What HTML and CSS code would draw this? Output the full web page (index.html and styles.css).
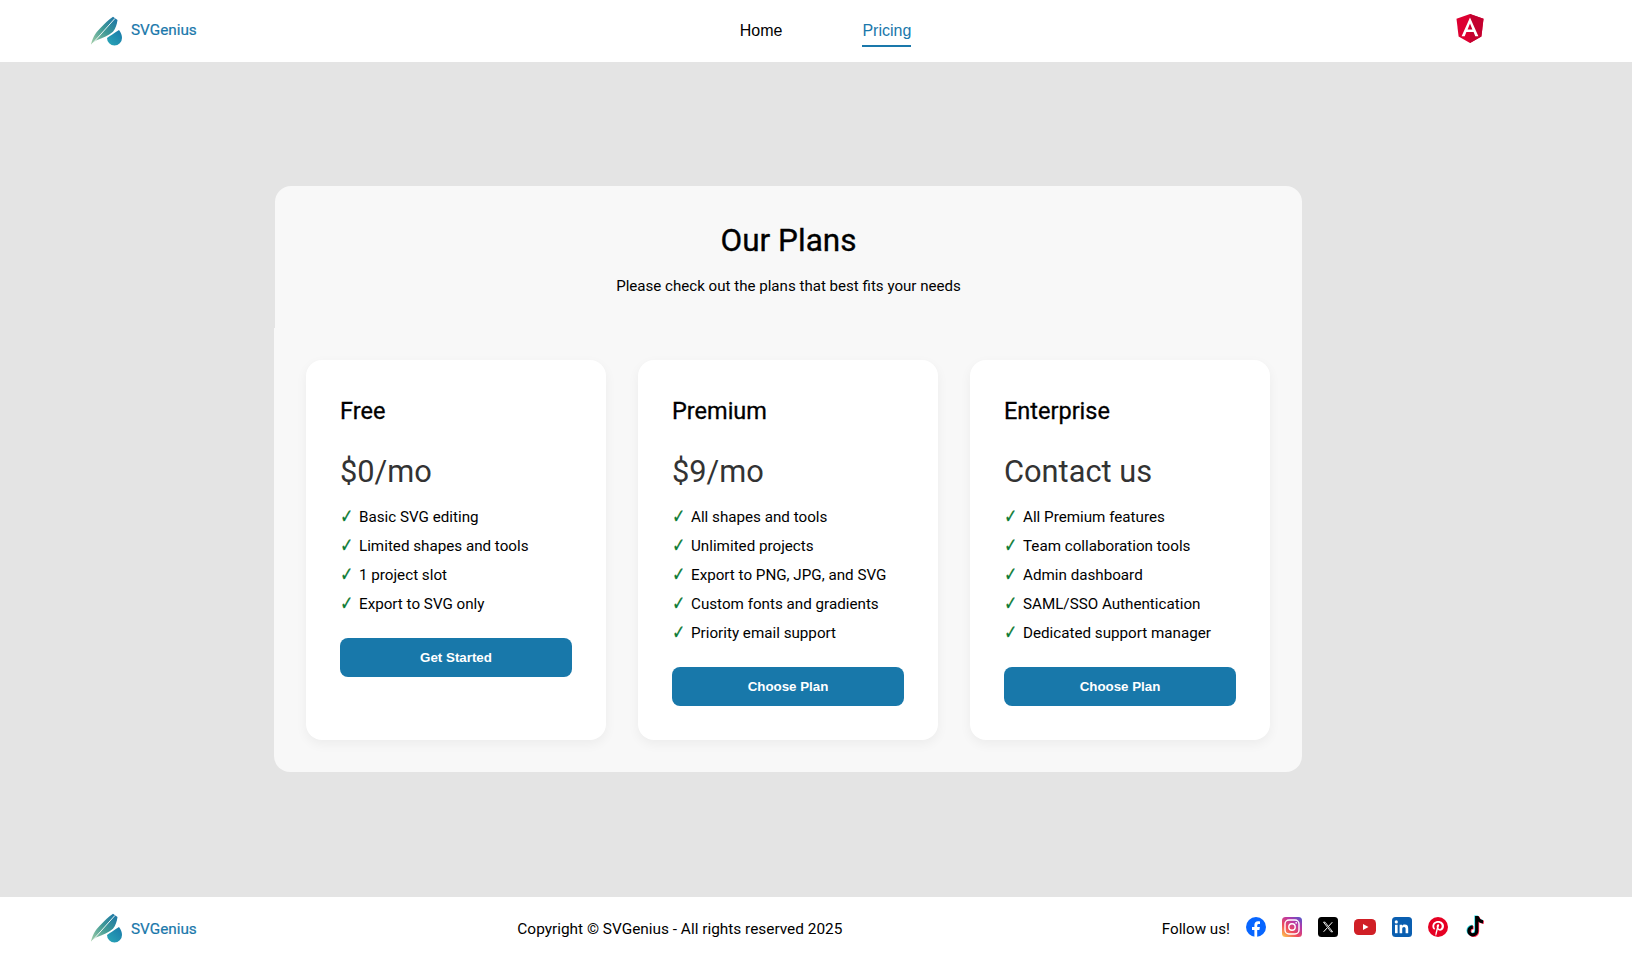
FILE: index.html
```html
<!DOCTYPE html>
<html lang="en">
<head>
    <meta charset="UTF-8">
    <title>SVGenius - Pricing</title>
    <link rel="stylesheet" href="styles.css">
</head>
<body>
    <!-- Top bar -->
    <header class="topbar">
        <a class="brand" href="#">
            <svg class="brand-logo" viewBox="0 0 32 30">
                <defs>
                    <linearGradient id="featherA" x1="0" y1="1" x2="1" y2="0">
                        <stop offset="0" stop-color="#a4cfa8"/>
                        <stop offset="0.5" stop-color="#3f9a96"/>
                        <stop offset="1" stop-color="#1a73a8"/>
                    </linearGradient>
                    <linearGradient id="dropA" x1="0" y1="1" x2="1" y2="0">
                        <stop offset="0" stop-color="#2aa8b8"/>
                        <stop offset="1" stop-color="#1878a8"/>
                    </linearGradient>
                </defs>
                <path d="M1 28.5 C3 20 7 15 11.7 10.7 C15 7.5 18 4 23 .8 L27.5 4 C27 8 25.5 13 23 15.7 C19 19 13 22 6 24.5 Z" fill="url(#featherA)"/>
                <path d="M2 28 L25 2.4" stroke="#fff" stroke-width="0.9"/>
                <path d="M17 22 C20 20 24 17 29 14 C31 17 32 19 32 22 A7.5 7.5 0 0 1 17 22 Z" fill="url(#dropA)"/>
            </svg>
            <span>SVGenius</span>
        </a>
        <nav class="nav">
            <a href="#">Home</a>
            <a href="#" class="active">Pricing</a>
        </nav>
        <div class="framework">
            <svg viewBox="0 0 28 30" width="28" height="30">
                <path d="M14 0 L27.5 4.8 L25.4 22.6 L14 29 L2.6 22.6 L.5 4.8 Z" fill="#dd0031"/>
                <path d="M14 0 L27.5 4.8 L25.4 22.6 L14 29 Z" fill="#c3002f"/>
                <path d="M14 3.4 L5.6 22.2 H8.7 L10.4 18 H17.6 L19.3 22.2 H22.4 Z M16.4 15.4 H11.6 L14 9.6 Z" fill="#fff" fill-rule="evenodd"/>
            </svg>
        </div>
    </header>

    <main class="content">
        <section class="plans">
            <div class="plans-head">
                <h1>Our Plans</h1>
                <p>Please check out the plans that best fits your needs</p>
            </div>
            <div class="plans-grid">
                <div class="card">
                    <h2>Free</h2>
                    <div class="price">$0/mo</div>
                    <ul>
                        <li>Basic SVG editing</li>
                        <li>Limited shapes and tools</li>
                        <li>1 project slot</li>
                        <li>Export to SVG only</li>
                    </ul>
                    <button class="plan-btn">Get Started</button>
                </div>
                <div class="card">
                    <h2>Premium</h2>
                    <div class="price">$9/mo</div>
                    <ul>
                        <li>All shapes and tools</li>
                        <li>Unlimited projects</li>
                        <li>Export to PNG, JPG, and SVG</li>
                        <li>Custom fonts and gradients</li>
                        <li>Priority email support</li>
                    </ul>
                    <button class="plan-btn">Choose Plan</button>
                </div>
                <div class="card">
                    <h2>Enterprise</h2>
                    <div class="price">Contact us</div>
                    <ul>
                        <li>All Premium features</li>
                        <li>Team collaboration tools</li>
                        <li>Admin dashboard</li>
                        <li>SAML/SSO Authentication</li>
                        <li>Dedicated support manager</li>
                    </ul>
                    <button class="plan-btn">Choose Plan</button>
                </div>
            </div>
        </section>
    </main>

    <!-- Footer -->
    <footer class="footer">
        <a class="brand" href="#">
            <svg class="brand-logo" viewBox="0 0 32 30">
                <path d="M1 28.5 C3 20 7 15 11.7 10.7 C15 7.5 18 4 23 .8 L27.5 4 C27 8 25.5 13 23 15.7 C19 19 13 22 6 24.5 Z" fill="url(#featherA)"/>
                <path d="M2 28 L25 2.4" stroke="#fff" stroke-width="0.9"/>
                <path d="M17 22 C20 20 24 17 29 14 C31 17 32 19 32 22 A7.5 7.5 0 0 1 17 22 Z" fill="url(#dropA)"/>
            </svg>
            <span>SVGenius</span>
        </a>
        <div class="copyright">Copyright © SVGenius - All rights reserved 2025</div>
        <div class="social">
            <span class="follow">Follow us!</span>
            <svg class="social-icon" viewBox="0 0 20 20">
                <circle cx="10" cy="10" r="10" fill="#0866ff"/>
                <path d="M8.4 20 V13 H6 V10 H8.4 V8 C8.4 5.5 9.8 4.2 12 4.2 C13 4.2 14 4.4 14 4.4 V7 H12.8 C11.6 7 11.2 7.7 11.2 8.5 V10 H13.9 L13.4 13 H11.2 V20 Z" fill="#fff"/>
            </svg>
            <svg class="social-icon" viewBox="0 0 20 20">
                <defs>
                    <linearGradient id="insta" x1="0.1" y1="1" x2="0.9" y2="0">
                        <stop offset="0" stop-color="#fdc14f"/>
                        <stop offset="0.35" stop-color="#ef4a5a"/>
                        <stop offset="0.7" stop-color="#b737a8"/>
                        <stop offset="1" stop-color="#5a55c8"/>
                    </linearGradient>
                </defs>
                <rect width="20" height="20" rx="3.5" fill="url(#insta)"/>
                <rect x="3" y="3" width="14" height="14" rx="4" fill="none" stroke="#fff" stroke-width="1.4"/>
                <circle cx="10" cy="10" r="3.2" fill="none" stroke="#fff" stroke-width="1.4"/>
                <circle cx="14.2" cy="5.8" r="0.9" fill="#fff"/>
            </svg>
            <svg class="social-icon" viewBox="0 0 20 20">
                <rect width="20" height="20" rx="3.5" fill="#000"/>
                <path d="M5.5 5.2 L13 14.8 H14.6 L7.1 5.2 Z" fill="none" stroke="#fff" stroke-width="0.9"/>
                <path d="M14.3 5.2 L10.6 9.3 M9.2 10.9 L5.6 14.8" stroke="#fff" stroke-width="1"/>
            </svg>
            <svg class="social-icon yt" viewBox="0 0 22 16">
                <rect width="22" height="16" rx="4.5" fill="#d01f26"/>
                <path d="M9 5 L14.5 8 L9 11 Z" fill="#fff"/>
            </svg>
            <svg class="social-icon" viewBox="0 0 20 20">
                <rect width="20" height="20" rx="3.5" fill="#0a5eb0"/>
                <rect x="3" y="7.8" width="2.6" height="8.4" fill="#fff"/>
                <circle cx="4.3" cy="4.9" r="1.6" fill="#fff"/>
                <path d="M7.6 7.8 H10 V9 C10.5 8.1 11.5 7.6 12.8 7.6 C15.4 7.6 16.2 9.2 16.2 11.6 V16.2 H13.6 V12.1 C13.6 11 13.3 10 12.1 10 C10.8 10 10.2 10.9 10.2 12.1 V16.2 H7.6 Z" fill="#fff"/>
            </svg>
            <svg class="social-icon" viewBox="0 0 20 20">
                <circle cx="10" cy="10" r="10" fill="#e60023"/>
                <path d="M8.1 18.6 C8.5 17.6 9 15.8 9.8 12.5 C10.2 13.2 11.1 13.7 12.1 13.7 C14.7 13.7 16 11.3 16 9 C16 6.2 13.5 4 10.3 4 C6.6 4 4.4 6.5 4.4 9.2 C4.4 10.6 5 12 6.2 12.6 C6.6 12.8 6.9 12.1 7 11.5 C6.4 10.9 6.2 10.1 6.2 9.3 C6.2 7.3 7.8 5.8 10.1 5.8 C12.2 5.8 13.7 7.1 13.7 9 C13.7 10.6 13 12 11.7 12 C10.9 12 10.3 11.3 10.5 10.6 C10.7 9.7 11.2 8.8 11.2 8.1 C11.2 6.6 9 6.9 8.7 8.9 C8.6 9.6 8.8 10.2 8.9 10.4 L7.5 16 C7.3 17 7.4 18 7.5 18.6 Z" fill="#fff"/>
            </svg>
            <svg class="social-icon tt" viewBox="0 0 20 22">
                <path d="M11.6 1 V14.6 A3.6 3.6 0 1 1 8 11" fill="none" stroke="#25d8e0" stroke-width="3" transform="translate(-.7 -.5)"/>
                <path d="M12 1.5 C12.6 4.4 14.6 6 17.4 6.2" fill="none" stroke="#25d8e0" stroke-width="3" transform="translate(-.7 -.5)"/>
                <path d="M11.6 1 V14.6 A3.6 3.6 0 1 1 8 11" fill="none" stroke="#fe2c55" stroke-width="3" transform="translate(.7 .5)"/>
                <path d="M12 1.5 C12.6 4.4 14.6 6 17.4 6.2" fill="none" stroke="#fe2c55" stroke-width="3" transform="translate(.7 .5)"/>
                <path d="M11.6 1 V14.6 A3.6 3.6 0 1 1 8 11" fill="none" stroke="#000" stroke-width="3"/>
                <path d="M12 1.5 C12.6 4.4 14.6 6 17.4 6.2" fill="none" stroke="#000" stroke-width="3"/>
            </svg>
        </div>
    </footer>
</body>
</html>
```

FILE: styles.css
```css
* {
    box-sizing: border-box;
}

body {
    margin: 0;
    height: 955px;
    display: flex;
    flex-direction: column;
    font-family: Roboto, "Liberation Sans", Arial, sans-serif;
    background-color: #e4e4e4;
    color: #000;
    overflow: hidden;
}

a {
    text-decoration: none;
    color: inherit;
}

/* Top bar */
.topbar {
    height: 62px;
    background-color: #fff;
    display: flex;
    justify-content: space-between;
    align-items: center;
    padding: 0 146px 0 90px;
}
.brand {
    display: flex;
    align-items: center;
    gap: 9px;
    color: #1a78ab;
    font-size: 15.3px;
    -webkit-text-stroke: 0.2px #1a78ab;
    width: 108px;
    white-space: nowrap;
}
.brand-logo {
    width: 32px;
    height: 30px;
    flex: none;
}
.topbar .brand span {
    margin-top: -2px;
}
.nav {
    display: flex;
    gap: 80px;
    margin-top: -1px;
    font-family: "Liberation Sans", Arial, sans-serif;
    font-size: 16px;
}
.nav a {
    display: block;
    padding: 7px 0 5px;
    border-bottom: 2px solid transparent;
}
.nav a.active {
    color: #1a78ab;
    border-bottom-color: #1a78ab;
}
.framework {
    width: 33px;
    display: flex;
    justify-content: flex-end;
    padding-right: 2px;
    margin-top: -4px;
}

/* Plans panel */
.content {
    flex: 1;
    display: flex;
    justify-content: center;
    align-items: center;
    padding: 0 56px 1px 0;
}
.plans {
    width: 1028px;
}
.plans-head {
    background-color: #f8f8f8;
    border-radius: 16px 16px 0 0;
    margin-left: 1px;
    height: 142px;
    padding-top: 37px;
    text-align: center;
}
.plans-head h1 {
    margin: 0;
    font-size: 31.5px;
    font-weight: 400;
    -webkit-text-stroke: 0.35px #000;
    line-height: 36px;
}
.plans-head p {
    margin: 17px 0 0;
    font-size: 15.1px;
    line-height: 20px;
}
.plans-grid {
    background-color: #f8f8f8;
    border-radius: 0 0 16px 16px;
    padding: 32px;
    display: grid;
    grid-template-columns: repeat(3, 300px);
    gap: 32px;
}

/* Cards */
.card {
    background-color: #fff;
    border-radius: 16px;
    box-shadow: 0 4px 12px rgba(0, 0, 0, 0.05);
    padding: 35px 34px 34px;
    height: 380px;
}
.card h2 {
    margin: 0;
    font-size: 23.5px;
    font-weight: 400;
    -webkit-text-stroke: 0.3px #000;
    line-height: 32px;
}
.price {
    margin-top: 25px;
    font-size: 30.8px;
    line-height: 40px;
    color: #333;
}
.card ul {
    list-style: none;
    margin: 11px 0 0;
    padding: 0;
}
.card li {
    font-size: 15.2px;
    line-height: 29px;
    padding-left: 19px;
    position: relative;
}
.card li::before {
    content: "✓";
    position: absolute;
    left: -1px;
    top: -2px;
    color: #0a7a33;
    font-family: "DejaVu Sans", sans-serif;
    font-size: 18px;
    font-weight: bold;
    -webkit-text-stroke: 0.3px #0a7a33;
    transform: scale(0.85, 1.1);
}
.plan-btn {
    display: block;
    width: 100%;
    height: 39px;
    margin-top: 19px;
    border: none;
    border-radius: 8px;
    background-color: #1878aa;
    color: #fff;
    font-family: "Liberation Sans", Arial, sans-serif;
    font-size: 13.33px;
    font-weight: bold;
    cursor: pointer;
}

/* Footer */
.footer {
    height: 58px;
    background-color: #fff;
    display: flex;
    justify-content: space-between;
    align-items: center;
    padding: 4px 146px 0 90px;
}
.copyright {
    font-size: 15.4px;
    margin-top: 2px;
}
.footer .brand span {
    margin-top: 1px;
}
.social {
    display: flex;
    align-items: center;
    gap: 16px;
    margin-top: -3px;
}
.follow {
    font-size: 15.2px;
    margin-top: 5px;
}
.social-icon {
    width: 20px;
    height: 20px;
    flex: none;
}
.social-icon.yt {
    width: 22px;
    height: 16px;
}
.social-icon.tt {
    width: 22px;
    height: 24px;
}
```
